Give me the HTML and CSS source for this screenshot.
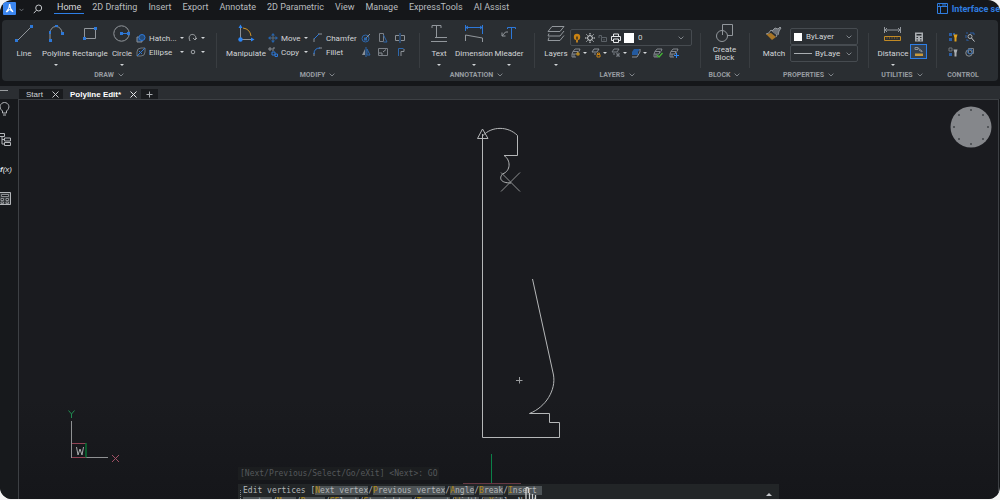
FILE: index.html
```html
<!DOCTYPE html>
<html lang="en">
<head>
<meta charset="utf-8">
<title>Polyline Edit</title>
<link rel="stylesheet" href="styles.css">
</head>
<body>
<svg class="defs" aria-hidden="true">
  <symbol id="chev" viewBox="0 0 6 4"><path d="M.6.6 3 3 5.4.6" fill="none" stroke="#888d93" stroke-width=".9"/></symbol>
  <symbol id="sheets" viewBox="0 0 10 10"><path d="M2 3.500 4 1h5L8 3.500M1 6l1-2.500h5L6 6H1v3h4M3 6v3M7 3.500V5" fill="none" stroke="#8b9096" stroke-width=".9"/></symbol>
</svg>
<div class="app">
  <header class="topbar">
    <button class="logo" aria-label="Application menu"><svg width="13" height="13" viewBox="0 0 13 13"><path d="M6 2h1.300L8 6l2.500 3.500-1 .8L6.700 8 4 10.400l-1.300-.6L5.300 6z" fill="#fff"/><path d="M6.600 5.500 5.500 7.300h2z" fill="#3b86f0"/></svg></button>
    <button class="drop" aria-label="Open menu"><svg width="5" height="4"><use href="#chev"/></svg></button>
    <button class="search" aria-label="Search"><svg width="10" height="10" viewBox="0 0 10 10"><circle cx="5.700" cy="4" r="3" fill="none" stroke="#c5c8cb"/><path d="M3.500 6.200.8 9.200" stroke="#c5c8cb"/></svg></button>
    <nav class="menu">
      <a href="#" class="on">Home</a><a href="#">2D Drafting</a><a href="#">Insert</a><a href="#">Export</a><a href="#">Annotate</a><a href="#">2D Parametric</a><a href="#">View</a><a href="#">Manage</a><a href="#">ExpressTools</a><a href="#">AI Assist</a>
    </nav>
    <a href="#" class="iface"><svg width="11" height="11" viewBox="0 0 11 11"><path d="M.5.5h10v10H.5zM.5 3.500h10M3.500 3.500v7M2 2h1M5 2h4" fill="none" stroke="#2f7de0"/></svg><span>Interface se</span></a>
  </header>

  <main class="ribbon">
    <section class="panel draw">
      <div class="tools">
        <button class="big"><svg width="20" height="20" viewBox="0 0 20 20"><path d="M3 17 17 3" stroke="#92979c"/><path d="M1 15h3v3H1zM16 1h3v3h-3z" fill="#2d78d8"/></svg><span>Line</span></button>
        <button class="big"><svg width="20" height="20" viewBox="0 0 20 20"><path d="M4 17V9a6 6.500 0 0 1 12 0" fill="none" stroke="#92979c"/><path d="M3 15h3v3H3zM3 7h2v3H3zM15 8h3v3h-3zM9 1h3v2H9z" fill="#2d78d8"/></svg><span>Polyline</span><i class="caret"></i></button>
        <button class="big"><svg width="20" height="20" viewBox="0 0 20 20"><path d="M4.500 4.500h11v10h-11z" fill="none" stroke="#92979c"/><path d="M3 13h3v3H3zM14 3h3v3h-3z" fill="#2d78d8"/></svg><span>Rectangle</span></button>
        <button class="big"><svg width="20" height="20" viewBox="0 0 20 20"><circle cx="9.500" cy="9.500" r="7.700" fill="none" stroke="#92979c"/><path d="M9 9.500h8" stroke="#2d78d8"/><path d="M8 8h3v3H8zM15 8h3v3h-3z" fill="#2d78d8"/></svg><span>Circle</span><i class="caret"></i></button>
        <div class="pairs">
          <button class="small"><svg width="10" height="10" viewBox="0 0 10 10"><path d="M1 4h5v5H1z" fill="#254b78" stroke="#8b9096"/><circle cx="6" cy="4.500" r="3" fill="#254b78" stroke="#2d78d8"/></svg><span>Hatch...</span><i class="caret"></i></button>
          <button class="small"><svg width="10" height="10" viewBox="0 0 10 10"><path d="M1 5a4 4 0 0 1 4-4h4v4a4 4 0 0 1-4 4H1z" fill="none" stroke="#6f757b"/><path d="M1 9 9 1M3 4l3 3" stroke="#2d78d8"/></svg><span>Ellipse</span><i class="caret"></i></button>
        </div>
        <div class="pairs">
          <button class="small" aria-label="Revision cloud"><svg width="10" height="10" viewBox="0 0 10 10"><path d="M2 8C-.5 3 3 1 5 1.500S9 4 7 7L5 5M7 7l2-2" fill="none" stroke="#a0a4a8"/></svg><i class="caret"></i></button>
          <button class="small" aria-label="Point"><svg width="10" height="10" viewBox="0 0 10 10"><circle cx="5" cy="5" r="1.800" fill="none" stroke="#a0a4a8"/></svg><i class="caret"></i></button>
        </div>
      </div>
      <h2>DRAW <svg width="6" height="4"><use href="#chev"/></svg></h2>
    </section>

    <section class="panel modify">
      <div class="tools">
        <button class="big wide"><svg width="20" height="20" viewBox="0 0 20 20"><path d="M4.500 4v12M4 15.500h12" stroke="#8b9096"/><path d="M7 4q7 1 8 8" fill="none" stroke="#cf9327"/><path d="M2.500 4 4.500.5 6.500 4zM15 13.500l3.500 2-3.500 2z" fill="#2d86f5"/><circle cx="4.500" cy="15.500" r="2.200" fill="#2d86f5"/></svg><span>Manipulate</span></button>
        <div class="pairs">
          <button class="small"><svg width="10" height="10" viewBox="0 0 10 10"><path d="M5 2v6M2 5h6" stroke="#5d6a78"/><path d="M5 0 7 2.500H3zM5 10 3 7.500h4zM0 5l2.500-2v4zM10 5 7.500 3v4z" fill="#2464b0"/></svg><span>Move</span><i class="caret"></i></button>
          <button class="small"><svg width="10" height="10" viewBox="0 0 10 10"><path d="M1 1h2v2H1zM5 1v3M5 1h2" fill="none" stroke="#8b9096"/><path d="M4 5h3v3H4zM7 7h2.500v2.500H7z" fill="none" stroke="#2d78d8"/></svg><span>Copy</span><i class="caret"></i></button>
        </div>
        <div class="pairs">
          <button class="small"><svg width="10" height="10" viewBox="0 0 10 10"><path d="M1 9V5.500M5 1h4" stroke="#8b9096"/><path d="M1 6 6 1" stroke="#2d78d8"/></svg><span>Chamfer</span></button>
          <button class="small"><svg width="10" height="10" viewBox="0 0 10 10"><path d="M1 9V6M6 1h3" stroke="#8b9096"/><path d="M1 7q0-6 6-6" fill="none" stroke="#2d78d8"/></svg><span>Fillet</span></button>
        </div>
        <div class="pairs icons3">
          <button aria-label="Rotate"><svg width="10" height="10" viewBox="0 0 10 10"><circle cx="4.500" cy="5.500" r="3.500" fill="none" stroke="#2d67ac"/><path d="M4 6l5-5" stroke="#8b9096"/><path d="M3 4.500h3v3H3z" fill="#2d67ac"/></svg></button>
          <button aria-label="Stretch"><svg width="10" height="10" viewBox="0 0 10 10"><path d="M1.500.5h4v8h-4z" fill="none" stroke="#7b8087"/><path d="M5.500 2 9 9H5.500" fill="none" stroke="#2d67ac"/></svg></button>
          <button aria-label="Break"><svg width="10" height="10" viewBox="0 0 10 10"><path d="M4 2.500H.5v5H4M6 2.500h3.500v5H6" fill="none" stroke="#8b9096"/><path d="M5 0v10" stroke="#2d67ac"/></svg></button>
          <button aria-label="Mirror"><svg width="10" height="10" viewBox="0 0 10 10"><path d="M4 2v6H1z" fill="#8b9096"/><path d="M6 2v6h3z" fill="none" stroke="#2d67ac"/><path d="M5 0v10" stroke="#2d67ac"/></svg></button>
          <button aria-label="Scale"><svg width="10" height="10" viewBox="0 0 10 10"><path d="M.5 1.500h9v7h-9z" fill="none" stroke="#7b8087"/><path d="M1 6h3v2.500M5 5l3-2.500" fill="none" stroke="#8b9096"/></svg></button>
          <button aria-label="Offset"><svg width="10" height="10" viewBox="0 0 10 10"><path d="M3.500 9V1.500h5" fill="none" stroke="#2d67ac"/><path d="M6 9V4.500h3V2" fill="none" stroke="#8b9096"/></svg></button>
        </div>
      </div>
      <h2>MODIFY <svg width="6" height="4"><use href="#chev"/></svg></h2>
    </section>

    <section class="panel annotation">
      <div class="tools">
        <button class="big"><svg width="20" height="20" viewBox="0 0 20 20"><path d="M3 4V1.500h9V4M7.500 2v12M6 13.500h12M2 17.500h16" fill="none" stroke="#92979c"/></svg><span>Text</span><i class="caret"></i></button>
        <button class="big wide"><svg width="20" height="20" viewBox="0 0 20 20"><path d="M1.500 1v6M18.500 1v9M2 3.500h16M4 2 2 3.500 4 5M16 2l2 1.500L16 5" fill="none" stroke="#2d78d8"/><path d="M1.500 17v-6l17 3v4" fill="none" stroke="#92979c"/></svg><span>Dimension</span><i class="caret"></i></button>
        <button class="big"><svg width="20" height="20" viewBox="0 0 20 20"><path d="M8.500 5V3.500h8V5M12.500 4v11" fill="none" stroke="#2d78d8"/><path d="M9 8H6.500L3 12M3 8.500V12h3.500" fill="none" stroke="#92979c"/></svg><span>Mleader</span><i class="caret"></i></button>
      </div>
      <h2>ANNOTATION <svg width="6" height="4"><use href="#chev"/></svg></h2>
    </section>

    <section class="panel layers">
      <div class="tools">
        <button class="big"><svg width="20" height="20" viewBox="0 0 20 20"><path d="M6 2.500h12l-4 5H2zM3 9.500l-1 2.500h12l4-5M3 13.500 2 16.500h12l4-5" fill="none" stroke="#92979c"/></svg><span>Layers</span><i class="caret"></i></button>
        <div class="stack">
          <div class="combo layercombo">
            <svg width="10" height="10" viewBox="0 0 10 10"><circle cx="5" cy="4" r="3.200" fill="#c98213"/><path d="M4 7h2v2.500H4z" fill="#b77c22"/><path d="M4 3.500h2v3H4z" fill="#59421d"/></svg>
            <svg width="10" height="10" viewBox="0 0 10 10"><circle cx="5" cy="5" r="2.400" fill="none" stroke="#dfe2e4"/><path d="M5 0v1.500M5 8.500V10M0 5h1.500M8.500 5H10M1.500 1.500l1 1M7.500 7.500l1 1M8.500 1.500l-1 1M2.500 7.500l-1 1" stroke="#dfe2e4"/></svg>
            <svg width="10" height="10" viewBox="0 0 10 10"><path d="M3.500 4.500h5v4h-5zM1 5V2.500h2.500v2M6 6v1.500" fill="none" stroke="#5c6268"/></svg>
            <svg width="10" height="10" viewBox="0 0 10 10"><path d="M2.500 3.500V1h5v2.500M2.500 7.500h-2v-4h9v4h-2M2.500 6h5v3.500h-5z" fill="none" stroke="#e4e6e8"/></svg>
            <i class="swatch"></i>
            <select aria-label="Current layer"><option>0</option></select>
            <svg width="6" height="4"><use href="#chev"/></svg>
          </div>
          <div class="row">
            <button aria-label="Layer on"><svg width="10" height="10"><use href="#sheets"/><circle cx="7" cy="6" r="1.800" fill="#b3861f"/></svg><i class="caret"></i></button>
            <button aria-label="Layer lock"><svg width="10" height="10" viewBox="0 0 10 10"><path d="M1 4 3 1h5L6 4zM3 6h2" fill="none" stroke="#8b9096"/><path d="M6 6.500h3V9H6zM6.500 6V5h2v1" fill="none" stroke="#c98213"/></svg><i class="caret"></i></button>
            <button aria-label="Layer freeze"><svg width="10" height="10" viewBox="0 0 10 10"><path d="M1 4 3 1h5L6 4zM2 6h2M7 4.500v4.500M5 5.500l4 3M9 5.500l-4 3" fill="none" stroke="#7b8087"/></svg><i class="caret"></i></button>
            <button aria-label="Layer isolate"><svg width="10" height="10" viewBox="0 0 10 10"><path d="M1 4 3 1h6L7 4zM1 4v3h6V4z" fill="#245a9f"/><path d="M1 9h5l3-5V1" fill="none" stroke="#8b9096"/></svg><i class="caret"></i></button>
            <button class="plain" aria-label="Set current"><svg width="10" height="10"><use href="#sheets"/><path d="m4 7 2 2 3.500-4" fill="none" stroke="#45b536" stroke-width="1.300"/></svg></button>
            <button class="plain" aria-label="New layer"><svg width="10" height="10"><use href="#sheets"/><path d="M7.500 5v5M5 7.500h5" stroke="#2d86f5"/></svg></button>
          </div>
        </div>
      </div>
      <h2>LAYERS <svg width="6" height="4"><use href="#chev"/></svg></h2>
    </section>

    <section class="panel block">
      <div class="tools">
        <button class="big two"><svg width="20" height="20" viewBox="0 0 20 20"><path d="M7.500 11V.5h10v11H12" fill="none" stroke="#92979c"/><circle cx="7" cy="12" r="5.500" fill="none" stroke="#92979c"/></svg><span>Create<br>Block</span></button>
      </div>
      <h2>BLOCK <svg width="6" height="4"><use href="#chev"/></svg></h2>
    </section>

    <section class="panel properties">
      <div class="tools">
        <button class="big"><svg width="20" height="20" viewBox="0 0 20 20"><path d="M2 10 7 9l5 4-4 3z" fill="#a87627"/><path d="M2 10q3 0 5-4l6 5-1 2" fill="none" stroke="#92979c"/><path d="m8 7 3-3 3 1 2-2 1 1-2 3-1 4" fill="#6c7177" stroke="#92979c"/></svg><span>Match</span></button>
        <div class="stack">
          <div class="combo"><i class="swatch sm"></i><select aria-label="Color"><option>ByLayer</option></select><svg width="6" height="4"><use href="#chev"/></svg></div>
          <div class="combo"><i class="stroke"></i><select aria-label="Linetype"><option>ByLaye</option></select><svg width="6" height="4"><use href="#chev"/></svg></div>
        </div>
      </div>
      <h2>PROPERTIES <svg width="6" height="4"><use href="#chev"/></svg></h2>
    </section>

    <section class="panel utilities">
      <div class="tools">
        <button class="big"><svg width="20" height="20" viewBox="0 0 20 20"><path d="M1.500 3v6M17.500 3v6M2 6h15M4 4 2 6l2 2M15 4l2 2-2 2" fill="none" stroke="#92979c"/><path d="M1.500 12.500h16v4h-16z" fill="none" stroke="#c28a25"/><path d="M4 13v2M6.500 13v2M9 13v2M11.500 13v2M14 13v2" stroke="#6b5227"/></svg><span>Distance</span><i class="caret"></i></button>
        <div class="stack util">
          <button aria-label="Calculator"><svg width="10" height="10" viewBox="0 0 10 10"><path d="M1 .5h8v9H1z" fill="#a9adb1"/><path d="M2.500 2h5v1.500h-5zM2.500 5H4v1H2.500zM6 5h1.500v1H6zM2.500 7.500H4v1H2.500zM6 7.500h1.500v1H6z" fill="#2a2e32"/></svg></button>
          <button class="picked" aria-label="Quick measure"><svg width="12" height="12" viewBox="0 0 12 12"><path d="M2 1.500h3v2H2zM5 2l4 3v1M9 6 6 4" fill="none" stroke="#8b9096"/><path d="M2 7.500h8v2.500H2z" fill="#c99a3c"/></svg></button>
        </div>
      </div>
      <h2>UTILITIES <svg width="6" height="4"><use href="#chev"/></svg></h2>
    </section>

    <section class="panel control">
      <div class="tools">
        <button aria-label="Filter on"><svg width="10" height="10" viewBox="0 0 10 10"><path d="M1 1h3v3H1zM1 6h3v3H1zM5 1h2v2H5z" fill="#2b5ea6"/><path d="M5.500 2.500h4L8.500 6v3.500h-2V6z" fill="#e0a01c"/></svg></button>
        <button aria-label="Select similar"><svg width="10" height="10" viewBox="0 0 10 10"><path d="M1 1h2M5 1h4v2M1 3v3M1 8h2v1" fill="none" stroke="#2b5ea6"/><circle cx="5" cy="4.500" r="2" fill="none" stroke="#a9adb1"/><path d="M6.500 6 9.500 9.500" stroke="#c5c8cb"/></svg></button>
        <button aria-label="Filter off"><svg width="10" height="10" viewBox="0 0 10 10"><path d="M1 1h3v3H1z" fill="none" stroke="#6f757b"/><path d="M1 6h3v3H1z" fill="#2b5ea6"/><path d="M5.500 2.500h4L8.500 6v3.500h-2V6z" fill="#a9adb1"/></svg></button>
        <button aria-label="Group"><svg width="10" height="10" viewBox="0 0 10 10"><circle cx="4" cy="6" r="3.200" fill="none" stroke="#8b9096"/><path d="M3.500 1.500h5v5h-5z" fill="none" stroke="#7b8087"/><circle cx="5" cy="4.500" r="2.500" fill="none" stroke="#2d67ac"/></svg></button>
      </div>
      <h2>CONTROL</h2>
    </section>
  </main>

  <div class="tabstrip">
    <span class="grip"></span>
    <div class="tab"><button>Start</button><button class="x" aria-label="Close Start"><svg width="7" height="7" viewBox="0 0 7 7"><path d="m.5.5 6 6M6.500.5l-6 6" stroke="#c5c8cb"/></svg></button></div>
    <div class="tab active"><button>Polyline Edit*</button><button class="x" aria-label="Close Polyline Edit"><svg width="7" height="7" viewBox="0 0 7 7"><path d="m.5.5 6 6M6.500.5l-6 6" stroke="#e6e8ea"/></svg></button></div>
    <div class="tab plus"><button aria-label="New tab"><svg width="7" height="7" viewBox="0 0 7 7"><path d="M3.500.5v6M.5 3.500h6" stroke="#a9adb1"/></svg></button></div>
  </div>

  <div class="work">
    <aside class="side">
      <button aria-label="Tips"><svg width="12" height="14" viewBox="0 0 12 14"><path d="M2.500 9C-2 5.500.5.500 4.500.5s6.500 5 2 8.500v2h-4z" fill="none" stroke="#b4b7ba"/><path d="M3 13h3" stroke="#b4b7ba"/></svg></button>
      <button aria-label="Structure"><svg width="12" height="14" viewBox="0 0 12 14"><path d="M0 1.500h4.500v3H0M2 5v7h2M2 7.500h2M4.500 6h6v3h-6zM4.500 10.500h6v3h-6z" fill="none" stroke="#b4b7ba"/></svg></button>
      <button aria-label="Parameters" class="fx"><b>f</b>(x)</button>
      <button aria-label="Calculator"><svg width="12" height="14" viewBox="0 0 12 14"><path d="M-1 .5h11.500v12H-1z" fill="#33373a" stroke="#b4b7ba"/><path d="M1.500 2.500h7v2h-7zM1 6.500h2.500v2H1zM6 6.500h2.500v2H6zM1 10h2.500v1.500H1zM6 10h2.500v1.500H6z" fill="#17191c" stroke="#b4b7ba" stroke-width=".7"/></svg></button>
    </aside>
    <div class="canvas">
      <svg class="drawing" width="100%" height="100%">
        <g transform="translate(-19 -100)" fill="none">
          <g stroke="#b5b7b8">
            <path d="M482.500 134V437.500H559.500V422.500H549.500V413.500H529.500C546 407 556 390 553.500 375L532.500 279"/>
            <path d="M482.500 129 477.500 138.500h10.500zM483 135.500C492 126 508 126 517.500 135.500V155.500H504C511 160 511 171 502.500 174C499 178 500 183 511 183"/>
            <path d="M501 172.500 520 191.500M520 172.500 501 191.500" stroke="#8f9293"/>
            <path d="M519.500 377v6.500M516 380.500h6.500" stroke="#9a9c9e"/>
          </g>
          <path d="M71.500 421v37M71 457.500h37" stroke="#8f9193"/>
          <path d="M72 443.500h14M72 457.500h14" stroke="#924355"/>
          <path d="M86 443v14.500" stroke="#077333" stroke-width="1.500"/>
          <path d="m68.500 410.500 3 3.500 3-3.500M71.500 414v4" stroke="#1f8a50"/>
          <path d="m112 455 7 7M119 455l-7 7" stroke="#a05064"/>
          <path d="m76.500 447 1.500 8 2-6 2 6 1.500-8" stroke="#a5a8a9"/>
          <path d="M491.500 454v30" stroke="#0b8048"/>
          <path d="M463 483.500h58" stroke="#663843"/>
        </g>
      </svg>
      <svg class="wheel" width="42" height="42" viewBox="0 0 42 42"><circle cx="21" cy="21" r="20.500" fill="#85878b"/><g fill="#43464a"><circle cx="21" cy="4" r="1"/><circle cx="33" cy="9" r="1"/><circle cx="38" cy="21" r="1"/><circle cx="33" cy="33" r="1"/><circle cx="21" cy="38" r="1"/><circle cx="9" cy="33" r="1"/><circle cx="4" cy="21" r="1"/><circle cx="9" cy="9" r="1"/></g></svg>
      <div class="history">[Next/Previous/Select/Go/eXit] &lt;Next&gt;: GO</div>
      <div class="command">
        <span class="handle"></span>
        <p>Edit vertices [<a href="#"><b>N</b>ext vertex</a>/<a href="#"><b>P</b>revious vertex</a>/<a href="#"><b>A</b>ngle</a>/<a href="#"><b>B</b>reak</a>/<a href="#"><b>I</b>nsert&nbsp;<br>vertex</a>/<a href="#"><b>M</b>ove</a>/<a href="#"><b>R</b>egen</a>/<a href="#"><b>SE</b>lect</a>/<a href="#"><b>S</b>traighten</a>/<a href="#"><b>T</b>angent</a>/<a href="#"><b>W</b>idth</a>/<a href="#">e<b>X</b>it</a>] &lt;Next&gt;:</p>
        <i class="up"></i>
      </div>
      <svg class="hand" width="18" height="12" viewBox="0 0 18 12"><path d="M4 12V2q0-1.500 1.200-1.500T6.400 2v4M7.500 12V6M10.500 12V7M13.500 12V8" fill="none" stroke="#d0d2d3" stroke-width="1.300"/></svg>
    </div>
  </div>
</div>
</body>
</html>
```
FILE: styles.css
```css
* { box-sizing: border-box; }
body { margin: 0; background: #f2f2f2; font-family: Roboto, "Liberation Sans", sans-serif; }
button { margin: 0; padding: 0; border: 0; background: none; color: inherit; font: inherit; display: flex; align-items: center; white-space: nowrap; }
a { color: inherit; text-decoration: none; }
svg { display: block; flex: none; }
.defs { position: absolute; width: 0; height: 0; }

.app { display: flex; flex-direction: column; height: calc(100vh - 1px); overflow: hidden; border-radius: 12px; background: #15171a; color: #d2d5d8; font-size: 8px; }

.topbar { display: flex; flex: none; height: 20px; padding-left: 3px; align-items: flex-start; overflow: hidden; }
.logo { margin-top: 2px; width: 13px; height: 13px; background: #3b86f0; border-radius: 1px; }
.drop { margin: 8px 0 0 3px; }
.search { margin: 4px 0 0 9px; }
.menu { display: flex; gap: 11px; margin-left: 14px; font-size: 9px; line-height: 15px; color: #b9bcbf; white-space: nowrap; }
.menu a.on { position: relative; color: #d8dadc; }
.menu a.on::after { content: ""; position: absolute; left: -3px; right: -3px; bottom: 1px; height: 1px; background: #2d7fe8; }
.iface { display: flex; gap: 4px; align-items: center; margin: 3px 0 0 auto; color: #2f7de0; font-size: 9px; font-weight: 700; white-space: nowrap; }

.ribbon { display: grid; flex: none; grid-template-columns: 214fr 203fr 115fr 166fr 49fr 119fr 68fr 62fr; margin: 0 2px; background: #2a2e32; border-radius: 4px; height: 61px; }
.panel { position: relative; display: flex; flex-direction: column; min-width: 0; }
.panel + .panel::before { content: ""; position: absolute; left: 0; top: 13px; bottom: 13px; width: 1px; background: #393d41; }
.panel h2 { display: flex; align-items: center; justify-content: center; gap: 4px; margin: 0; height: 10px; font-size: 7px; line-height: 10px; font-weight: 700; color: #979ca1; }
.tools { display: flex; height: 50px; padding-top: 4px; align-items: flex-start; }
.big { flex-direction: column; flex: none; width: 32px; }
.big span { line-height: 10px; margin-top: 5px; }
.big.two span { line-height: 8px; margin-top: 2px; text-align: center; }
.caret { flex: none; width: 0; height: 0; border: 2px solid transparent; border-top-color: #d2d5d8; border-bottom: 0; }
.big .caret { margin-top: 5px; }
.pairs { display: grid; grid-auto-rows: 14px; margin-top: 7px; flex: none; }
.small span { margin-left: 3px; }
.small .caret { margin-left: auto; }

.draw .tools { padding-left: 6px; }
.draw .big:nth-child(3) { width: 36px; }
.draw .big:nth-child(4) { width: 28px; }
.draw .pairs { width: 48px; }
.draw .pairs + .pairs { width: 17px; margin-left: 4px; }
.modify .tools { padding-left: 10px; }
.wide { width: 38px; }
.modify .wide { width: 40px; }
.modify .pairs { margin-left: 2px; width: 40px; }
.modify .pairs + .pairs { margin-left: 5px; }
.modify .pairs.icons3 { width: 51px; grid-template-columns: repeat(3, 17px); margin-left: 8px; }
.annotation .tools { padding-left: 4px; }
.layers .tools { padding-left: 6px; }
.stack { flex: 1; min-width: 0; display: flex; flex-direction: column; }

.combo { display: flex; align-items: center; gap: 3px; height: 17px; padding: 0 5px 0 3px; border: 1px solid #464b50; border-radius: 2px; }
.combo select { flex: 1; min-width: 0; padding: 0; border: 0; appearance: none; background: transparent; color: #d2d5d8; font: inherit; }
.combo .swatch + select { margin-left: 1px; }
.layers .stack { padding: 5px 8px 0 0; }
.layers .big { margin-right: -2px; }
.layercombo { padding: 0 7px 0 1px; }
.swatch { flex: none; width: 10px; height: 10px; background: #fff; }
.swatch.sm { width: 8px; height: 8px; }
.stroke { flex: none; width: 18px; height: 1px; background: #a9adb1; }
.row { display: flex; margin-top: 2px; gap: 4px; padding-left: 1px; }
.row button { gap: 2px; }
.row .plain { padding-left: 2px; }
.block .tools, .control .tools { justify-content: center; }
.properties .tools { padding-left: 9px; }
.properties .stack { padding: 4px 10px 0 0; }
.utilities .tools { padding-left: 9px; }
.util { flex: none; padding-top: 8px; width: 17px; gap: 2px; align-items: center; margin-left: 1px; }
.picked { width: 17px; height: 15px; justify-content: center; border: 1px solid #2d7fe8; background: #34404f; }
.control { padding-right: 8px; }
.control .tools { display: grid; grid-template-columns: 10px 10px; gap: 5px 7px; padding: 12px 4px 0 0; align-content: start; }

.tabstrip { display: flex; flex: none; height: 13px; margin-top: 5px; background: #2b2e32; font: 8px "Liberation Sans", Arial, sans-serif; }
.grip { width: 19px; height: 8px; background: linear-gradient(90deg, #9a9da0 0 8px, transparent 8px) 0 4px / 100% 1px no-repeat; }
.tab { display: flex; align-items: center; justify-content: space-between; margin-top: 3px; padding: 0 4px 0 7px; width: 44px; background: #191b1e; }
.tab.active { width: 78px; background: none; color: #fff; font-weight: 700; }
.tab.plus { width: 17px; padding: 0 5px; }

.work { display: flex; flex: 1; min-height: 0; }
.side { display: flex; flex: none; flex-direction: column; gap: 16px; width: 18px; padding-top: 3px; background: #17191c; }
.side button { height: 14px; }
.fx { font: italic 8px "Liberation Sans", sans-serif; color: #e2e4e6; }
.canvas { position: relative; flex: 1; min-width: 0; margin-right: 1px; border: 1px solid #3d4044; border-bottom: 0; background: linear-gradient(#1a1b1f 0 75%, #15161a); overflow: hidden; }
.drawing { position: absolute; inset: 0; }
.wheel { position: absolute; top: 6px; right: 6px; }
.history, .command { font: 8px/11px "DejaVu Sans Mono", monospace; white-space: nowrap; }
.history { position: absolute; left: 219px; bottom: 19px; height: 13px; padding: 1px 2px; background: #1b1d1f; color: #55585b; }
.command { position: absolute; left: 219px; bottom: 0; display: flex; width: 541px; height: 15px; padding: 1px 7px 0 2px; overflow: hidden; background: #222527; color: #b4b7b9; }
.handle { width: 3px; height: 10px; margin-top: 5px; background: repeating-linear-gradient(#85888a 0 1px, transparent 1px 2px) 0 0 / 1px 100% no-repeat; }
.command p { flex: 1; margin: 0; }
.command a { background: #4d5356; }
.command b { font-weight: 400; color: #b08a14; }
.up { width: 0; height: 0; margin-top: 8px; border: 3px solid transparent; border-top: 0; border-bottom-color: #c5c8cb; }
.hand { position: absolute; left: 503px; bottom: 0; }
```
